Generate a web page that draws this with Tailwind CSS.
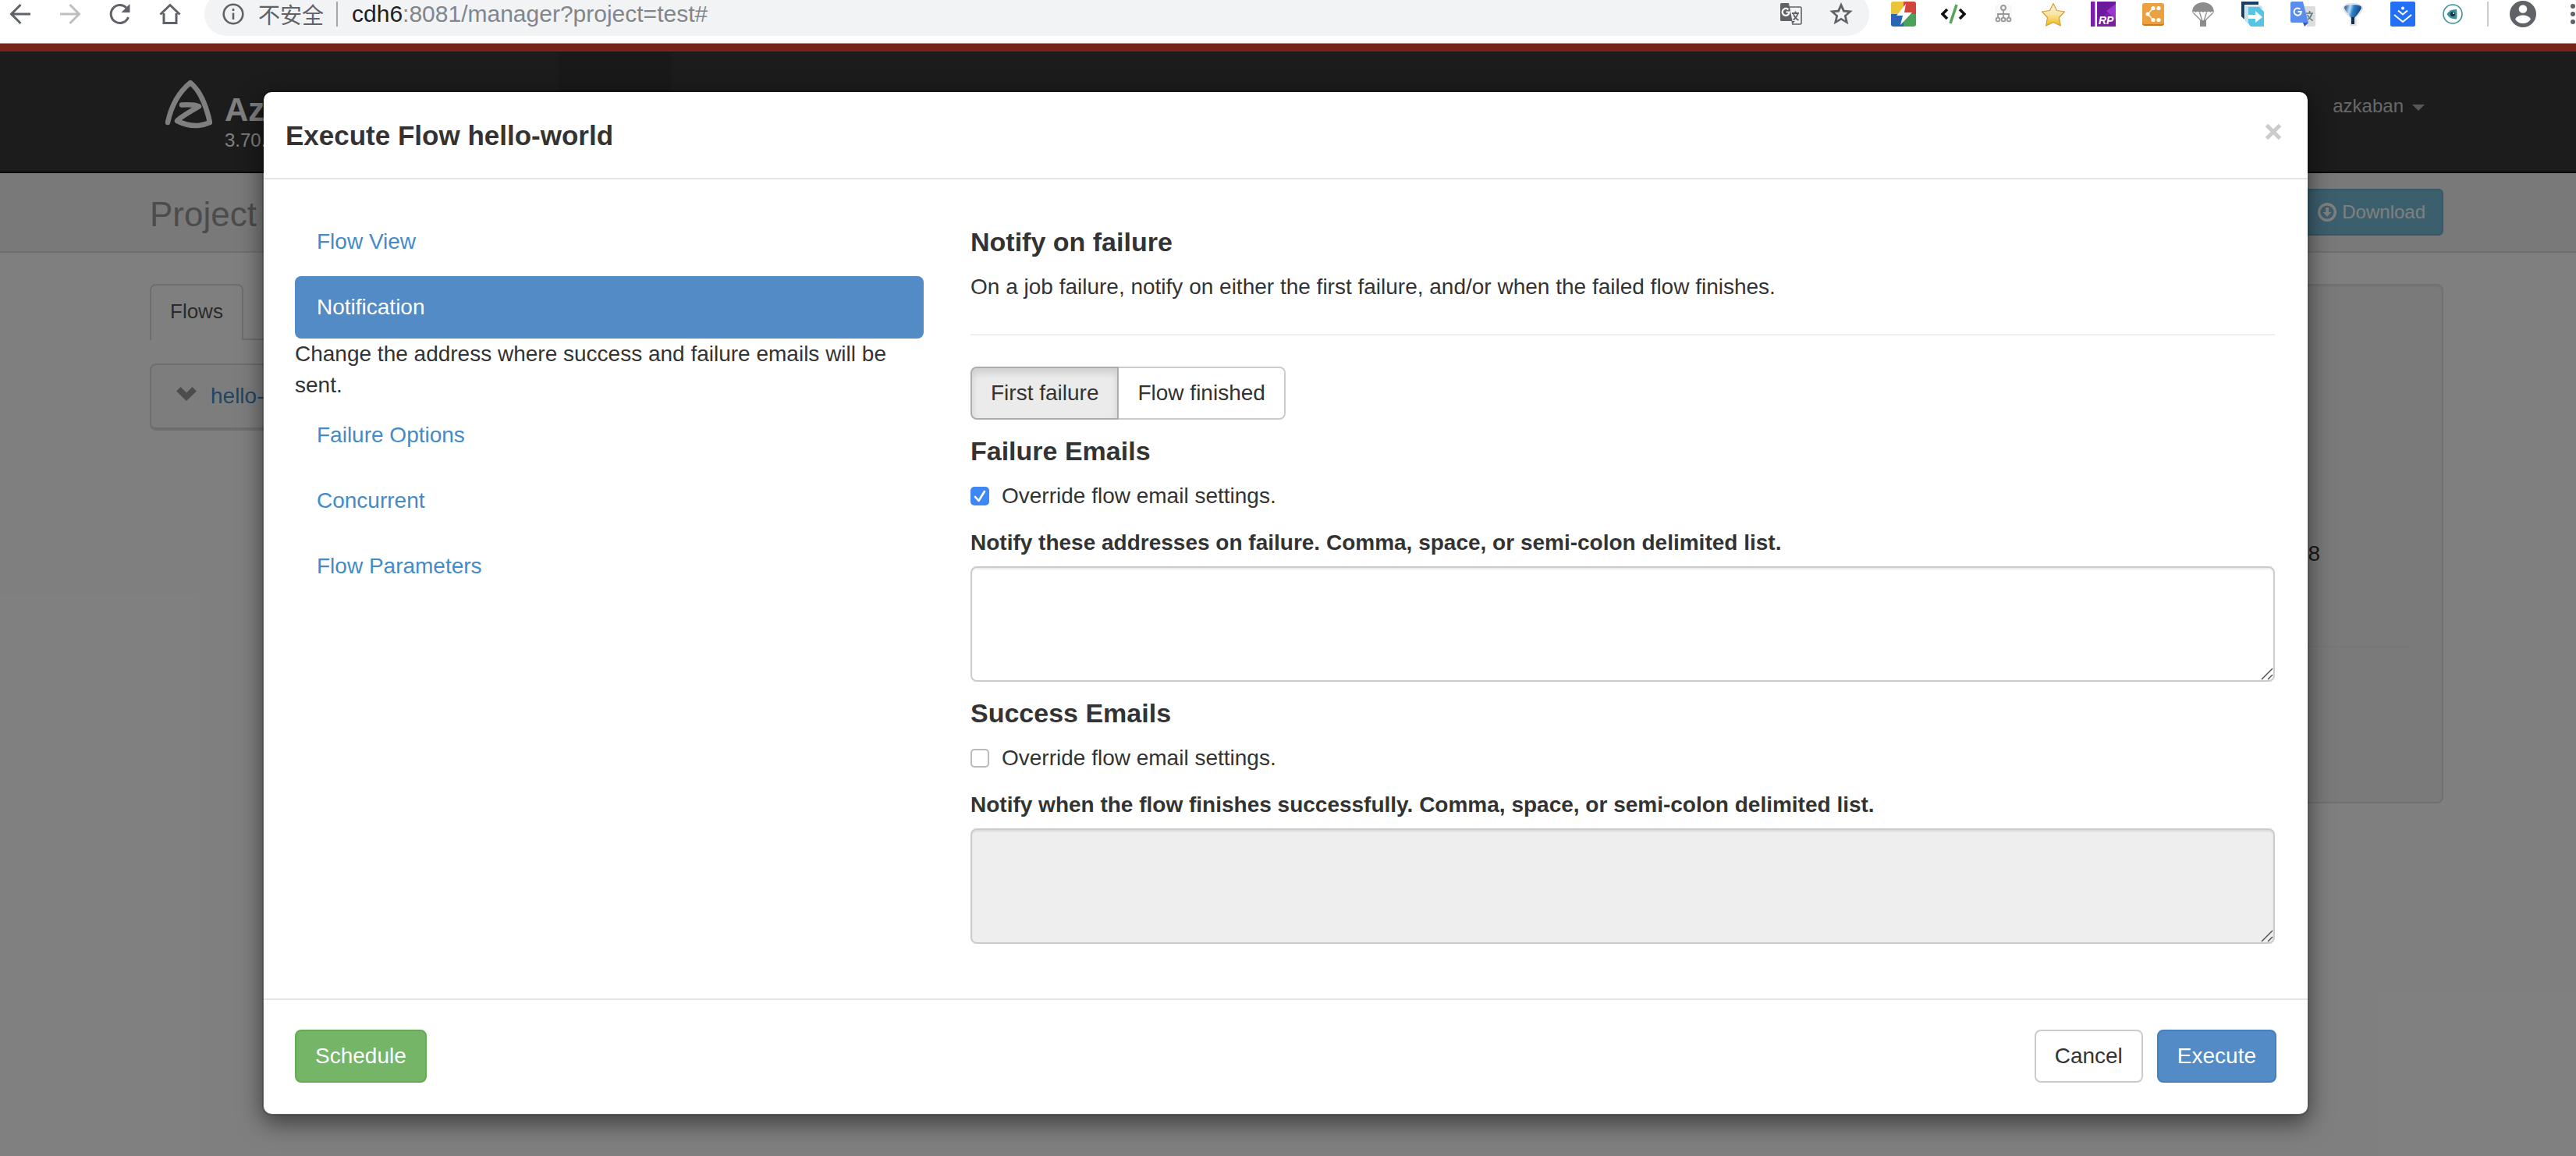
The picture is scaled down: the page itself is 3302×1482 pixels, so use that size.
<!DOCTYPE html>
<html lang="en">
<head>
<meta charset="utf-8">
<title>Azkaban - Execute Flow</title>
<script src="https://cdn.jsdelivr.net/npm/@tailwindcss/browser@4"></script>
</head>
<body class="flex min-h-screen flex-col bg-white font-['Liberation_Sans',Arial,sans-serif] text-[28px] leading-[40px] text-[#333]">

<!-- Browser toolbar -->
<header class="flex h-14 items-start overflow-hidden border-b border-[#aaa] bg-white">
  <nav class="flex h-9 shrink-0 items-center gap-8 pl-[10px]" aria-label="Browser navigation">
    <button aria-label="Back"><svg class="size-8" viewBox="0 0 32 32" fill="none" stroke="#5f6368" stroke-width="3"><path d="M29 16H5M16.500 4 4.500 16l12 12"/></svg></button>
    <button aria-label="Forward"><svg class="size-8" viewBox="0 0 32 32" fill="none" stroke="#bdbfc1" stroke-width="3"><path d="M3 16h24M15.500 4l12 12-12 12"/></svg></button>
    <button aria-label="Reload"><svg class="size-8" viewBox="0 0 32 32" fill="none" stroke="#5f6368" stroke-width="3"><path d="M26.500 20a11.500 11.500 0 1 1-2.500-12"/><path d="M28.500 3v11h-11z" fill="#5f6368" stroke="none"/></svg></button>
    <button aria-label="Home"><svg class="size-8" viewBox="0 0 32 32" fill="none" stroke="#5f6368" stroke-width="3"><path d="M8 15v12.500h16V15M3.500 16.500 16 4.500l12.500 12"/></svg></button>
  </nav>
  <div class="-mt-2.5 ml-[28px] flex h-14 min-w-0 flex-1 items-center rounded-full bg-[#f1f3f4] pr-[20px] pl-[23px]">
    <svg class="size-7 shrink-0" viewBox="0 0 28 28" fill="none" stroke="#5f6368" stroke-width="2.600"><circle cx="14" cy="14" r="12.300"/><path d="M14 12.500V21M14 7v3"/></svg>
    <span class="ml-[18px] whitespace-nowrap font-['Noto_Sans_CJK_SC',sans-serif] text-[28px] leading-8 text-[#5f6368]">不安全</span>
    <span class="ml-4 h-8 w-0.5 bg-[#a5a7aa]"></span>
    <span class="ml-[18px] flex-1 truncate text-[30px] text-[#80868b]"><span class="text-[#202124]">cdh6</span>:8081/manager?project=test#</span>
    <button aria-label="Translate page"><svg class="size-7" viewBox="0 0 28 28"><path d="M12 5h13.500a1.500 1.500 0 0 1 1.500 1.500v19a1.500 1.500 0 0 1-1.500 1.500H15" fill="none" stroke="#5f6368" stroke-width="1.600"/><path d="M1.500 0H10l5 23H1.500A1.500 1.500 0 0 1 0 21.500v-20A1.500 1.500 0 0 1 1.500 0z" fill="#5f6368"/><path d="M10 0h1l4.500 23h-3z" fill="#5f6368"/><path d="M14.500 23 15 27l4-4z" fill="#5f6368"/><path d="M7.500 11.500h4.200a4.500 4.500 0 1 1-1.300-3.300" fill="none" stroke="#fff" stroke-width="2.200"/><path d="M15 13h9M19.500 10.500V13M22.500 13c-1 4-3.500 7-6 8.500M17 14c1 3.500 4 6.500 6.500 8" fill="none" stroke="#5f6368" stroke-width="1.800"/></svg></button>
    <button class="ml-[34px]" aria-label="Bookmark"><svg class="size-8" viewBox="0 0 32 32" fill="#5f6368" fill-rule="evenodd"><path d="M16 1l4.400 9.700 10.300 1-7.900 7 2.500 10.500L16 23.800l-9.300 5.400 2.500-10.500-7.900-7 10.300-1zM16 8l-2.400 5.500-6 .5 4.600 4-1.400 6L16 20.800l5.200 3.200-1.400-6 4.600-4-6-.500z"/></svg></button>
  </div>
  <div class="ml-7 flex h-9 shrink-0 items-center gap-8">
    <svg class="size-8" viewBox="0 0 32 32"><clipPath id="lightningClip"><rect width="32" height="32" rx="3"/></clipPath><g clip-path="url(#lightningClip)"><path fill="#e9c53c" d="M0 0h17v16H0z"/><path fill="#d2443c" d="M16 0h16v17H16z"/><path fill="#2b64b4" d="M0 16h16v16H0z"/><path fill="#4ba25a" d="M16 16h16v16H16z"/></g><path d="M19 3 7 18h8l-3 12 15-16h-10z" fill="#fff"/></svg>
    <svg class="size-8" viewBox="0 0 32 32" fill="none" stroke-width="3.600"><path d="M8 10l-6 6 6 6M24 10l6 6-6 6" stroke="#111"/><path d="M20 4l-8 24" stroke="#58a45a"/></svg>
    <svg class="size-8" viewBox="0 0 32 32" fill="none" stroke="#999" stroke-width="1.800"><rect x="5" y="5" width="22" height="23" fill="#f8f8f8" stroke="none"/><circle cx="16" cy="8" r="3"/><path d="M16 11v9.500M9 20.500V16h14v4.500"/><circle cx="9" cy="23" r="2.400"/><circle cx="16" cy="23" r="2.400"/><circle cx="23" cy="23" r="2.400"/></svg>
    <svg class="size-8" viewBox="0 0 32 32"><defs><linearGradient id="goldFill" x2="0" y2="1"><stop stop-color="#fff8df"/><stop offset=".5" stop-color="#fbe3a0"/><stop offset="1" stop-color="#efb90e"/></linearGradient></defs><path d="M16 2.500l4.500 9 10 1.500-7 7.500 1.800 10.500-9.300-4.500L6.700 31l1.800-10.500-7-7.500 10-1.500z" fill="url(#goldFill)" stroke="#d59c3c" stroke-width="1.200" stroke-linejoin="round"/></svg>
    <svg class="size-8" viewBox="0 0 32 32"><path fill="#7a1fa8" d="M0 0h32v32H0z"/><path d="M9 0h23v8L9 22z" fill="#6a1a9a"/><path d="M20 12l12-9v20z" fill="#9a35d0"/><path fill="#fff" d="M5.500 0H8v32H5.500z"/><text x="10" y="29" font-family="Liberation Sans" font-size="14" font-weight="bold" font-style="italic" fill="#fff">RP</text></svg>
    <svg class="size-8" viewBox="0 0 32 32"><rect x="2" y="3" width="28" height="28" rx="3" fill="#c9772a"/><rect x="2" y="2" width="28" height="27" rx="3" fill="#eda040"/><g fill="#fff"><circle cx="9" cy="16" r="2.600"/><circle cx="16" cy="8.500" r="2.600"/><circle cx="16" cy="23.500" r="2.600"/><circle cx="23" cy="8.500" r="2.600"/><circle cx="23" cy="23.500" r="2.600"/></g><path d="M16 8.500 9 16l7 7.500" stroke="#fff" fill="none" stroke-width="1.300"/></svg>
    <svg class="size-8" viewBox="0 0 32 32"><path d="M2 14C2 6 8 1 16 1s14 5 14 13q-2.300-2.500-4.600 0-2.300-2.500-4.700 0-2.400-2.500-4.700 0-2.300-2.500-4.700 0-2.300-2.500-4.700 0Q4.300 11.500 2 14z" fill="#8c8c8c"/><path d="M3 14l11 11M11.500 14l3.500 11M20.500 14 17 25M29 14 18 25" stroke="#8c8c8c" stroke-width="1.300"/><path fill="#8c8c8c" d="M12 24h8v8h-8z"/></svg>
    <svg class="size-8" viewBox="0 0 32 32"><path d="M1 0h22v4H5v19l-4-4z" fill="#173f68"/><path d="M6 5h20l3 4H10v20l-4-4z" fill="#c9dfea"/><path d="M10 7h14l6 6v19H13l-3-4z" fill="#56c4e2"/><path d="M10 17h9v-5l9 8-9 7v-5h-9z" fill="#fff"/></svg>
    <svg class="size-8" viewBox="0 0 32 32"><path d="M16 6h14a2 2 0 0 1 2 2v22a2 2 0 0 1-2 2H21z" fill="#dcdcdc"/><path d="M16 27h7l-5 5z" fill="#3a55b5"/><path d="M2 0h14l7 27H2a2 2 0 0 1-2-2V2a2 2 0 0 1 2-2z" fill="#5b8dee"/><path d="M9.500 13h4.300a4.600 4.600 0 1 1-1.400-3.200" fill="none" stroke="#fff" stroke-width="2"/><path d="M20 15h9M24.500 12v3M27.500 15c-1 4-3 6.500-5 8M21.500 17c1.500 3 4 5.500 7 7.500" fill="none" stroke="#607a86" stroke-width="1.600"/></svg>
    <svg class="size-8" viewBox="0 0 32 32"><defs><linearGradient id="blueFill" x2="1" y2=".3"><stop stop-color="#0d3c7c"/><stop offset=".35" stop-color="#b5def8"/><stop offset=".55" stop-color="#2d7cc4"/><stop offset="1" stop-color="#0c3f80"/></linearGradient></defs><path d="M4 8Q5 3 16 3t12 5q0 4-8.500 12v10h-6V20Q4 12 4 8z" fill="#fff" stroke="#e3e3e3" stroke-width="2.500"/><path d="M5 8q0-4 11-4t11 4q-1 4-9 13v8h-4v-8Q6 12 5 8z" fill="url(#blueFill)"/><path d="M14 20h4v9h-4z" fill="#122c4c"/></svg>
    <svg class="size-8" viewBox="0 0 32 32"><rect width="32" height="32" rx="2" fill="#2370f4"/><circle cx="16" cy="8.500" r="2" fill="#fff"/><path d="M10 11.500l6 5 6-5M5 17l11 9 11-9" fill="none" stroke="#fff" stroke-width="2"/></svg>
    <svg class="size-8" viewBox="0 0 32 32"><circle cx="16" cy="16" r="12" fill="#fff" stroke="#3b8f98" stroke-width="1.600"/><path d="M8.500 16Q12 9.500 21 10q1 8 0 12.500Q12 23 8.500 16z" fill="#3b8f98"/><circle cx="16" cy="16" r="3" fill="#13303c"/><circle cx="17" cy="15" r="1" fill="#fff"/></svg>
  </div>
  <div class="ml-7 flex h-9 shrink-0 items-center">
    <span class="h-8 w-0.5 bg-[#ccc]"></span>
    <button class="ml-[27px]" aria-label="Profile"><svg class="size-[34px]" viewBox="0 0 34 34"><circle cx="17" cy="17" r="17" fill="#5f6368"/><circle cx="17" cy="10.500" r="5.300" fill="#fff"/><path d="M7 23.500q3-5 10-5t10 5q-3.500 5.500-10 5.500T7 23.500z" fill="#fff"/></svg></button>
    <button class="mr-px ml-11" aria-label="Browser menu"><svg class="h-8 w-1.5" viewBox="0 0 6 32" fill="#5f6368"><circle cx="3" cy="6" r="3"/><circle cx="3" cy="16" r="3"/><circle cx="3" cy="26" r="3"/></svg></button>
  </div>
</header>

<main class="relative flex-1 overflow-hidden">
  <!-- Project page, behind the dialog -->
  <div class="flex h-[166px] border-t-[10px] border-b-2 border-t-[#ee482e] border-b-black bg-[#393939] pr-[194px] pl-[212px]">
    <a href="#" class="flex w-[504px] shrink-0 gap-4">
      <svg class="mt-9 h-16 w-[60px]" viewBox="0 0 60 64" fill="none" stroke="#fff" stroke-linecap="round" stroke-linejoin="round"><path d="M3 55Q10 22 32 4q17 14 25 51-20 9-42-2 4-5 28-18.500-6-3-22-2" stroke-width="6.500"/></svg>
      <span class="pt-[52px] font-bold text-white"><span class="block text-[42px] leading-[46px]">Az</span><span class="block text-[24px] leading-8 font-normal">3.70.</span></span>
    </a>
    <span class="w-36 bg-[#333]"></span>
    <button class="ml-auto flex items-start gap-[11px] pt-[50px] text-[24px] leading-[40px] text-[#d0d0d0]">azkaban
      <svg class="mt-[18px] h-2 w-4" viewBox="0 0 16 8" fill="#b0b0b0"><path d="M0 0h16L8 8z"/></svg></button>
  </div>
  <div class="flex h-[102px] items-center justify-between border-b-2 border-[#dfdfdf] bg-[#f2f2f2] pr-[170px] pl-48">
    <h1 class="pt-1.5 text-[44px] leading-[52px] text-[#999]">Project</h1>
    <button class="flex h-[60px] items-center gap-[7px] rounded-md border-2 border-[#6ab2d0] bg-[#78bedc] px-[21px] text-[24px] text-white">
      <svg class="size-6" viewBox="0 0 24 24"><circle cx="12" cy="12" r="10.300" fill="none" stroke="#fff" stroke-width="3.400"/><path d="M10 6h4v6h3.500L12 18l-5.500-6H10z" fill="#fff"/></svg>Download</button>
  </div>
  <div class="grid grid-cols-[2fr_1fr] gap-[60px] pt-[40px] pr-[170px] pl-48">
    <div>
      <div class="flex">
        <a href="#" class="h-[72px] rounded-t-lg border-2 border-b-0 border-[#ddd] px-[24px] pt-[13px] text-[26px] text-[#555]">Flows</a>
        <span class="flex-1 border-b-2 border-[#ddd]"></span>
      </div>
      <div class="mt-[30px] flex items-start gap-[18px] rounded-lg border-2 border-b-4 border-[#ddd] bg-[#fbfbfb] px-8 py-[20px]">
        <svg class="mt-2 h-[18px] w-[26px]" viewBox="0 0 26 18" fill="#999"><path d="M5.500 0 13 7.500 20.500 0 26 5.500 13 18 0 5.500z"/></svg>
        <a href="#" class="text-[#428bca]">hello-</a>
      </div>
    </div>
    <aside class="h-[666px] rounded-lg border-2 border-[#e3e3e3] bg-[#f5f5f5] px-[38px] shadow-[inset_0_2px_2px_#0000000d]">
      <div class="flex h-[464px] items-end justify-end border-b-2 border-[#eee] pr-[118px] pb-[98px]">8</div>
    </aside>
  </div>

  <div class="absolute inset-0 bg-black/50"></div>

  <!-- Execute Flow dialog -->
  <div class="absolute inset-x-0 top-0 pt-[60px] pr-[342px] pl-[336px]">
    <section role="dialog" aria-labelledby="dialogTitle" class="rounded-xl border-2 border-black/20 bg-white bg-clip-padding shadow-[0_10px_30px_#00000080]">
      <div class="flex h-28 items-start justify-between border-b-2 border-[#e5e5e5] pr-[32px] pl-[28px]">
        <h2 id="dialogTitle" class="pt-9 text-[35px] font-bold">Execute Flow hello-world</h2>
        <button class="mt-[39px]" aria-label="Close"><svg class="size-6" viewBox="0 0 24 24" stroke="#ccc" stroke-width="5"><path d="M3.500 3.500l17 17M20.500 3.500l-17 17"/></svg></button>
      </div>

      <div class="grid grid-cols-[806fr_1672fr] gap-[60px] pt-[40px] pr-[42px] pb-[70px] pl-[40px]">
        <ul class="flex flex-col gap-1">
          <li><a href="#" class="block rounded-lg px-[28px] py-[20px] text-[#428bca]">Flow View</a></li>
          <li><a href="#" class="block rounded-lg bg-[#528bc5] px-[28px] py-[20px] text-white">Notification</a>
            <p>Change the address where success and failure emails will be sent.</p></li>
          <li><a href="#" class="block rounded-lg px-[28px] py-[20px] text-[#428bca]">Failure Options</a></li>
          <li><a href="#" class="block rounded-lg px-[28px] py-[20px] text-[#428bca]">Concurrent</a></li>
          <li><a href="#" class="block rounded-lg px-[28px] py-[20px] text-[#428bca]">Flow Parameters</a></li>
        </ul>

        <form class="pt-[20px]">
          <h3 class="text-[34px] font-bold">Notify on failure</h3>
          <p class="mt-[18px]">On a job failure, notify on either the first failure, and/or when the failed flow finishes.</p>
          <hr class="my-[40px] border-t-2 border-[#eee]">
          <div class="flex">
            <button type="button" class="h-[68px] rounded-l-lg border-2 border-[#adadad] bg-[#ebebeb] px-[24px] shadow-[inset_0_6px_10px_#00000020]">First failure</button>
            <button type="button" class="h-[68px] rounded-r-lg border-2 border-l-0 border-[#ccc] bg-white px-[24px]">Flow finished</button>
          </div>

          <h3 class="mt-[20px] text-[34px] font-bold">Failure Emails</h3>
          <label class="mt-[18px] flex items-center gap-4">
            <span class="grid">
              <input type="checkbox" checked class="col-start-1 row-start-1 size-6 appearance-none rounded-[5px] bg-[#3f87f5]">
              <svg class="pointer-events-none col-start-1 row-start-1 size-6" viewBox="0 0 24 24" fill="none" stroke="#fff" stroke-width="2.600" stroke-linecap="round" stroke-linejoin="round"><path d="M6 13l4.500 5L18 6"/></svg>
            </span>Override flow email settings.</label>
          <label for="failureEmails" class="mt-[20px] block font-bold">Notify these addresses on failure. Comma, space, or semi-colon delimited list.</label>
          <div class="relative mt-2.5">
            <textarea id="failureEmails" class="block h-[148px] w-full resize-none rounded-lg border-2 border-[#ccc] bg-white px-6 py-3 shadow-[inset_0_2px_2px_#00000013]"></textarea>
            <svg class="absolute right-0.5 bottom-0.5 size-4" viewBox="0 0 16 16" stroke="#555" stroke-width="1.500"><path d="M1 15 15 1M9 15l6-6"/></svg>
          </div>

          <h3 class="mt-[20px] text-[34px] font-bold">Success Emails</h3>
          <label class="mt-[18px] flex items-center gap-4">
            <input type="checkbox" class="size-6 appearance-none rounded-[5px] border-2 border-[#bbb] bg-white">Override flow email settings.</label>
          <label for="successEmails" class="mt-[20px] block font-bold">Notify when the flow finishes successfully. Comma, space, or semi-colon delimited list.</label>
          <div class="relative mt-2.5">
            <textarea id="successEmails" disabled class="block h-[148px] w-full resize-none rounded-lg border-2 border-[#ccc] bg-[#eee] px-6 py-3 shadow-[inset_0_2px_2px_#00000013]"></textarea>
            <svg class="absolute right-0.5 bottom-0.5 size-4" viewBox="0 0 16 16" stroke="#555" stroke-width="1.500"><path d="M1 15 15 1M9 15l6-6"/></svg>
          </div>
        </form>
      </div>

      <div class="flex gap-[18px] border-t-2 border-[#e5e5e5] px-[40px] pt-[38px] pb-[40px]">
        <button class="mr-auto h-[68px] rounded-lg border-2 border-[#67aa56] bg-[#74b567] px-[24px] text-white">Schedule</button>
        <button class="h-[68px] rounded-lg border-2 border-[#ccc] bg-white px-[24px]">Cancel</button>
        <button class="h-[68px] rounded-lg border-2 border-[#4480bd] bg-[#528bc5] px-[24px] text-white">Execute</button>
      </div>
    </section>
  </div>
</main>
</body>
</html>
